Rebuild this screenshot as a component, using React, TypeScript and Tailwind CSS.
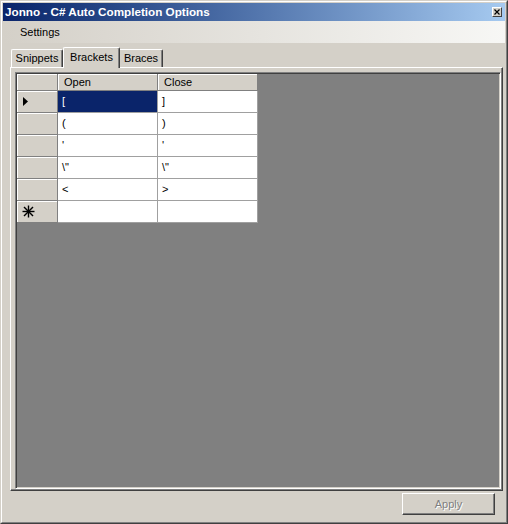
const rows: [string, string][] = [
  ['[', ']'],
  ['(', ')'],
  ["'", "'"],
  ['\\"', '\\"'],
  ['<', '>'],
]

const Asterisk = () => (
  <svg width="13" height="13" viewBox="0 0 13 13" className="block">
    <g stroke="#000" strokeWidth="1.4">
      <line x1="6.5" y1="0.5" x2="6.5" y2="12.5" />
      <line x1="0.5" y1="6.5" x2="12.5" y2="6.5" />
      <line x1="2" y1="2" x2="11" y2="11" />
      <line x1="11" y1="2" x2="2" y2="11" />
    </g>
  </svg>
)

const App = () => {
  return (
    <div className="w-[508px] h-[524px] bg-[#d4d0c8] border border-t-[#d4d0c8] border-l-[#d4d0c8] border-r-[#404040] border-b-[#404040] font-['Liberation_Sans',Arial,sans-serif] text-[11px] text-black select-none">
      <div className="h-full flex flex-col border border-t-white border-l-white border-r-[#808080] border-b-[#808080] p-px">
        {/* title bar */}
        <div className="h-[18px] flex items-center justify-between bg-linear-to-r from-[#0a246a] to-[#a6caf0] pl-[2px] pr-[3px]">
          <span className="text-white font-bold text-[11.7px] leading-none">Jonno - C# Auto Completion Options</span>
          <div className="w-[10px] h-[10px] bg-[#d4d0c8] border border-t-white border-l-white border-r-[#404040] border-b-[#404040] flex items-center justify-center">
            <svg width="6" height="6" viewBox="0 0 6 6" className="block">
              <path d="M0.5 0.5 L5.5 5.5 M5.5 0.5 L0.5 5.5" stroke="#000" strokeWidth="1.2" />
            </svg>
          </div>
        </div>

        {/* menu strip */}
        <div className="h-[22px] flex items-center pl-[17px] bg-linear-to-r from-[#d4d0c8] to-[#f7f7f5]">
          <span>Settings</span>
        </div>

        {/* tab control */}
        <div className="flex flex-col pl-[7px] pt-[4px]">
          <div className="h-[20px] flex items-end pl-px">
            <div className="w-[52px] h-[18px] flex items-center justify-center border border-t-white border-l-white border-r-[#404040] border-b-0 rounded-t-[2px] shadow-[inset_-1px_0_0_#808080]">
              Snippets
            </div>
            <div className="relative z-10 -mb-px w-[57px] h-[21px] flex items-center justify-center bg-[#d4d0c8] border border-t-white border-l-white border-r-[#404040] border-b-0 rounded-t-[2px] shadow-[inset_-1px_0_0_#808080] pb-[2px]">
              Brackets
            </div>
            <div className="w-[43px] h-[18px] flex items-center justify-center border border-t-white border-l-0 border-r-[#404040] border-b-0 rounded-tr-[2px] shadow-[inset_-1px_0_0_#808080]">
              Braces
            </div>
          </div>

          <div className="w-[493px] h-[424px] flex flex-col border border-t-white border-l-white border-r-[#404040] border-b-[#404040] shadow-[inset_-1px_-1px_0_#808080] pt-[4px] pl-[4px] pr-[1px] pb-[1px]">
            <div className="flex-1 bg-[#808080] border border-t-[#808080] border-l-[#808080] border-r-white border-b-white shadow-[inset_1px_1px_0_#404040,inset_-1px_-1px_0_#d4d0c8] p-px">
              <div className="w-[241px] flex flex-col">
                <div className="h-[17px] flex">
                  <div className="w-[41px] bg-[#d4d0c8] border-r border-b border-[#808080] shadow-[inset_1px_1px_0_#fff]" />
                  <div className="w-[100px] flex items-center pl-[6px] pt-px bg-[#d4d0c8] border-r border-b border-[#808080] shadow-[inset_1px_1px_0_#fff]">
                    Open
                  </div>
                  <div className="w-[100px] flex items-center pl-[6px] pt-px bg-[#d4d0c8] border-r border-b border-[#808080] shadow-[inset_1px_1px_0_#fff]">
                    Close
                  </div>
                </div>

                {rows.map(([open, close], i) => (
                  <div key={i} className="h-[22px] flex">
                    <div className="w-[41px] flex items-center pl-[6px] bg-[#d4d0c8] border-r border-b border-[#808080] shadow-[inset_1px_1px_0_#fff]">
                      {i === 0 && (
                        <svg width="5" height="9" viewBox="0 0 5 9" className="block">
                          <path d="M0 0 L5 4.5 L0 9 Z" fill="#000" />
                        </svg>
                      )}
                    </div>
                    <div
                      className={
                        i === 0
                          ? 'w-[100px] flex items-center pl-[4px] bg-[#0a246a] text-white border-r border-b border-[#a0a0a0]'
                          : 'w-[100px] flex items-center pl-[4px] bg-white border-r border-b border-[#a0a0a0]'
                      }
                    >
                      {open}
                    </div>
                    <div className="w-[100px] flex items-center pl-[4px] bg-white border-r border-b border-[#a0a0a0]">
                      {close}
                    </div>
                  </div>
                ))}

                <div className="h-[22px] flex">
                  <div className="w-[41px] flex items-center pl-[5px] bg-[#d4d0c8] border-r border-b border-[#808080] shadow-[inset_1px_1px_0_#fff]">
                    <Asterisk />
                  </div>
                  <div className="w-[100px] bg-white border-r border-b border-[#a0a0a0]" />
                  <div className="w-[100px] bg-white border-r border-b border-[#a0a0a0]" />
                </div>
              </div>
            </div>
          </div>
        </div>

        {/* bottom buttons */}
        <div className="flex justify-end pr-[10px] pt-[2px]">
          <button
            type="button"
            disabled
            className="w-[93px] h-[22px] flex items-center justify-center bg-[#d4d0c8] border border-t-white border-l-white border-r-[#404040] border-b-[#404040] shadow-[inset_-1px_-1px_0_#808080] text-[#808080] [text-shadow:1px_1px_0_#fff]"
          >
            Apply
          </button>
        </div>
      </div>
    </div>
  )
}

export default App
